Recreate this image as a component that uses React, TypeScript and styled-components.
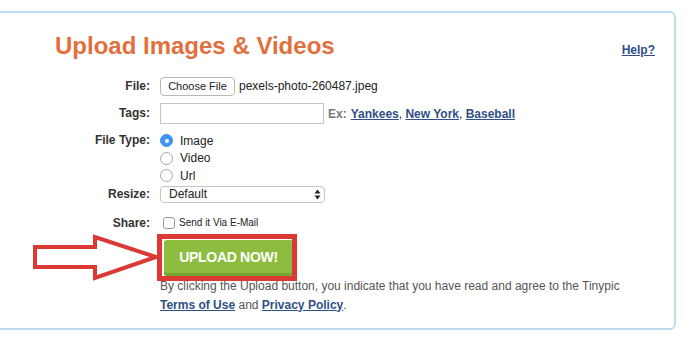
import React from 'react';
import styled, { createGlobalStyle } from 'styled-components';

const GlobalStyle = createGlobalStyle`
  body {
    margin: 0;
    background: #fff;
    font-family: "Liberation Sans", Arial, sans-serif;
    overflow: hidden;
  }
`;

const Panel = styled.div`
  margin: 11px 19px 0 -10px;
  height: 319px;
  border: 2px solid #bcdcef;
  border-radius: 6px;
  padding: 19px 19px 0 63px;
  box-sizing: border-box;
`;

const Header = styled.div`
  display: flex;
  justify-content: space-between;
  align-items: baseline;
  height: 44px;
`;

const Title = styled.h1`
  margin: 0;
  font-size: 24px;
  line-height: 28px;
  font-weight: bold;
  color: #e2703c;
`;

const Link = styled.a<{ $size?: number }>`
  color: #2f4f86;
  font-weight: bold;
  font-size: ${(p) => p.$size ?? 12}px;
  text-decoration: underline;
  cursor: pointer;
`;

const Form = styled.div`
  display: grid;
  grid-template-columns: 95px 1fr;
  column-gap: 10px;
  align-items: start;
`;

const Label = styled.div<{ $h: number; $mt?: number }>`
  height: ${(p) => p.$h}px;
  margin-top: ${(p) => p.$mt ?? 0}px;
  line-height: ${(p) => p.$h}px;
  text-align: right;
  font-size: 12px;
  font-weight: bold;
  color: #333;
`;

const Field = styled.div<{ $h: number; $mt?: number }>`
  min-height: ${(p) => p.$h}px;
  margin-top: ${(p) => p.$mt ?? 0}px;
  display: flex;
  align-items: center;
  gap: 4px;
  font-size: 12px;
  color: #222;
`;

const FileButton = styled.button`
  height: 19px;
  width: 75px;
  padding: 0;
  border: 1px solid #b9b9b9;
  border-radius: 4px;
  background: #fff;
  font-family: inherit;
  font-size: 11px;
  color: #222;
`;

const TextInput = styled.input`
  width: 164px;
  height: 21px;
  box-sizing: border-box;
  border: 1px solid #c4c4c4;
  margin: 0;
`;

const Hint = styled.span`
  font-weight: bold;
  color: #777;
`;

const RadioList = styled.div`
  display: flex;
  flex-direction: column;
`;

const RadioRow = styled.label`
  height: 17.5px;
  display: flex;
  align-items: center;
  gap: 7px;
  font-size: 12px;
  color: #222;
`;

const Radio = styled.span<{ $on?: boolean }>`
  width: 13px;
  height: 13px;
  box-sizing: border-box;
  border-radius: 50%;
  border: 1px solid ${(p) => (p.$on ? '#3a8ff2' : '#a9a9a9')};
  background: ${(p) => (p.$on ? '#3d95f7' : '#fff')};
  display: flex;
  align-items: center;
  justify-content: center;
  &::after {
    content: '';
    width: 4px;
    height: 4px;
    border-radius: 50%;
    background: ${(p) => (p.$on ? '#fff' : 'transparent')};
  }
`;

const Select = styled.div`
  width: 165px;
  height: 17px;
  box-sizing: border-box;
  border: 1px solid #c4c4c4;
  border-radius: 4px;
  display: flex;
  align-items: center;
  justify-content: space-between;
  padding: 0 3px 0 8px;
  font-size: 12px;
  color: #222;
`;

const Checkbox = styled.span`
  width: 12px;
  height: 12px;
  box-sizing: border-box;
  border: 1px solid #999;
  border-radius: 3px;
  margin-left: 3px;
  background: #fff;
`;

const Small = styled.span`
  font-size: 10px;
  color: #222;
`;

const ButtonWrap = styled.div`
  position: relative;
  margin: 9px 0 0 4px;
  width: 129px;
`;

const UploadButton = styled.button`
  width: 129px;
  height: 36px;
  border: none;
  border-radius: 3px;
  background: #8dbd3e;
  box-shadow: inset 0 -3px 0 #77a530;
  color: #fff;
  font-family: inherit;
  font-size: 14px;
  font-weight: bold;
  letter-spacing: -0.3px;
  padding: 0 0 2px;
`;

const Highlight = styled.div`
  position: absolute;
  left: -7px;
  top: -6px;
  width: 140px;
  height: 47px;
  box-sizing: border-box;
  border: 5px solid #db3a34;
  pointer-events: none;
`;

const Arrow = styled.svg`
  position: absolute;
  left: -130px;
  top: -4px;
  overflow: visible;
`;

const Disclaimer = styled.p`
  margin: 1px 0 0;
  font-size: 12px;
  line-height: 19px;
  color: #555;
`;

export default function App() {
  return (
    <>
      <GlobalStyle />
      <Panel>
        <Header>
          <Title>Upload Images &amp; Videos</Title>
          <Link $size={12}>Help?</Link>
        </Header>
        <Form>
          <Label $h={20}>File:</Label>
          <Field $h={20}>
            <FileButton>Choose File</FileButton>
            <span>pexels-photo-260487.jpeg</span>
          </Field>

          <Label $h={21} $mt={7}>Tags:</Label>
          <Field $h={21} $mt={7}>
            <TextInput />
            <Hint>Ex:</Hint>
            <span>
              <Link>Yankees</Link>, <Link>New York</Link>, <Link>Baseball</Link>
            </span>
          </Field>

          <Label $h={17.5} $mt={8}>File Type:</Label>
          <Field $h={52} $mt={8}>
            <RadioList>
              <RadioRow><Radio $on />Image</RadioRow>
              <RadioRow><Radio />Video</RadioRow>
              <RadioRow><Radio />Url</RadioRow>
            </RadioList>
          </Field>

          <Label $h={17} $mt={1}>Resize:</Label>
          <Field $h={17} $mt={1}>
            <Select>
              <span>Default</span>
              <svg width="7" height="11" viewBox="0 0 7 11">
                <path d="M3.5 0.5 L6.5 4.5 H0.5 Z M3.5 10.5 L6.5 6.5 H0.5 Z" fill="#222" />
              </svg>
            </Select>
          </Field>

          <Label $h={16} $mt={12}>Share:</Label>
          <Field $h={16} $mt={12}>
            <Checkbox />
            <Small>Send it Via E-Mail</Small>
          </Field>

          <div />
          <div>
            <ButtonWrap>
              <Arrow width="126" height="44" viewBox="0 0 126 44">
                <path
                  d="M1 11 H61 V1 L122 21 L61 42 V31 H1 Z"
                  fill="#fff"
                  stroke="#db3a34"
                  strokeWidth="4"
                  strokeLinejoin="miter"
                />
              </Arrow>
              <UploadButton>UPLOAD NOW!</UploadButton>
              <Highlight />
            </ButtonWrap>
            <Disclaimer>
              By clicking the Upload button, you indicate that you have read and agree to the Tinypic
              <br />
              <Link>Terms of Use</Link> and <Link>Privacy Policy</Link>.
            </Disclaimer>
          </div>
        </Form>
      </Panel>
    </>
  );
}
